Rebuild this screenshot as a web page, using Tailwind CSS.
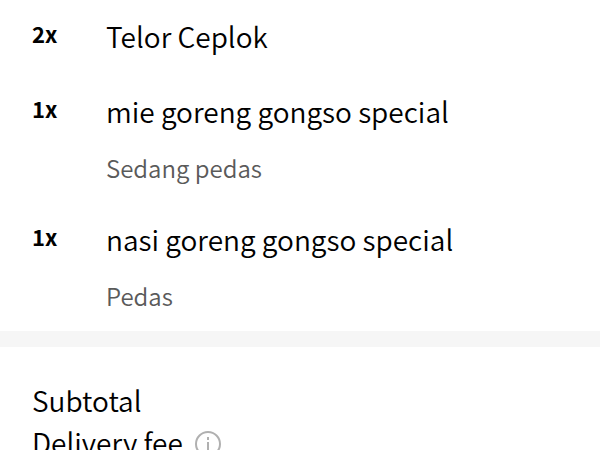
<!DOCTYPE html>
<html lang="id">
<head>
    <meta charset="UTF-8">
    <meta name="viewport" content="width=device-width, initial-scale=1.0">
    <title>Order</title>
    <script src="https://cdn.jsdelivr.net/npm/@tailwindcss/browser@4"></script>
</head>
<body class="bg-white text-black font-['Noto_Sans_CJK_SC',sans-serif] font-[350]">
<main>
    <ul class="px-8 pt-4 pb-[19px] text-[28px] leading-10">
        <li class="flex pb-[35px]">
            <span class="w-[74px] text-[22px] leading-[34px] font-bold">2x</span>
            <p>Telor Ceplok</p>
        </li>
        <li class="flex pb-[35px]">
            <span class="w-[74px] text-[22px] leading-[34px] font-bold">1x</span>
            <div>
                <p>mie goreng gongso special</p>
                <p class="pt-[21px] text-2xl leading-8 text-[#5a5a5a]">Sedang pedas</p>
            </div>
        </li>
        <li class="flex">
            <span class="w-[74px] text-[22px] leading-[34px] font-bold">1x</span>
            <div>
                <p>nasi goreng gongso special</p>
                <p class="pt-[21px] text-2xl leading-8 text-[#5a5a5a]">Pedas</p>
            </div>
        </li>
    </ul>
    <div class="h-4 bg-[#f6f6f6]"></div>
    <section class="px-8 pt-8 text-[28px] leading-[42px]">
        <p>Subtotal</p>
        <div class="flex items-center gap-[11px]">
            <p>Delivery fee</p>
            <button type="button" aria-label="Delivery fee info">
                <svg class="size-7" viewBox="0 0 28 28" fill="none" stroke="#b0b0b0" stroke-width="2">
                    <circle cx="14" cy="16" r="12"/>
                    <path d="M14 14v8M14 9v3"/>
                </svg>
            </button>
        </div>
    </section>
</main>
</body>
</html>
